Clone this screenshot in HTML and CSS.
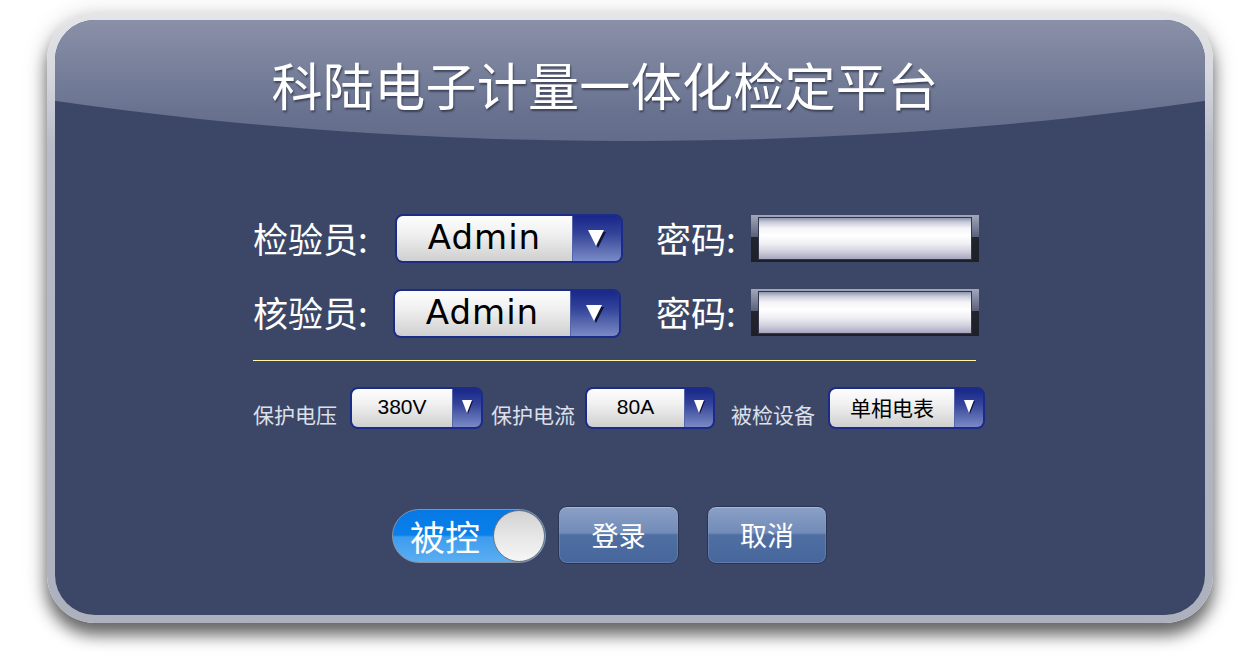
FILE: index.html
```html
<!DOCTYPE html>
<html lang="zh-CN">
<head>
<meta charset="utf-8">
<title>科陆电子计量一体化检定平台</title>
<link rel="stylesheet" href="styles.css">
</head>
<body>
<div class="frame">
  <div class="panel">
    <h1 class="title">科陆电子计量一体化检定平台</h1>
    <div class="form">
      <div class="row">
        <span class="lbl lbl-a">检验员:</span>
        <div class="sel sel-big"><span class="val">Admin</span><span class="arr"><svg width="20" height="20" viewBox="0 0 20 20"><polygon points="3,3 19,3 11,19" fill="#101436"/><polygon points="1,1 17,1 9,17" fill="#fff"/></svg></span></div>
        <span class="lbl lbl-p">密码:</span>
        <div class="pwd"><div class="pwd-in"></div></div>
      </div>
      <div class="row row2">
        <span class="lbl lbl-b">核验员:</span>
        <div class="sel sel-big"><span class="val">Admin</span><span class="arr"><svg width="20" height="20" viewBox="0 0 20 20"><polygon points="3,3 19,3 11,19" fill="#101436"/><polygon points="1,1 17,1 9,17" fill="#fff"/></svg></span></div>
        <span class="lbl lbl-p">密码:</span>
        <div class="pwd"><div class="pwd-in"></div></div>
      </div>
      <div class="sep"></div>
      <div class="row row3">
        <span class="slbl slbl-1">保护电压</span>
        <div class="sel sel-sm w1"><span class="val">380V</span><span class="arr"><svg width="13" height="16" viewBox="0 0 13 16"><polygon points="2,2 12,2 7,15" fill="#101436"/><polygon points="1,1 11,1 6,14" fill="#fff"/></svg></span></div>
        <span class="slbl slbl-2">保护电流</span>
        <div class="sel sel-sm w2"><span class="val">80A</span><span class="arr"><svg width="13" height="16" viewBox="0 0 13 16"><polygon points="2,2 12,2 7,15" fill="#101436"/><polygon points="1,1 11,1 6,14" fill="#fff"/></svg></span></div>
        <span class="slbl slbl-3">被检设备</span>
        <div class="sel sel-sm w3"><span class="val cjk">单相电表</span><span class="arr"><svg width="13" height="16" viewBox="0 0 13 16"><polygon points="2,2 12,2 7,15" fill="#101436"/><polygon points="1,1 11,1 6,14" fill="#fff"/></svg></span></div>
      </div>
      <div class="actions">
        <div class="toggle"><span class="toggle-text">被控</span><span class="knob"></span></div>
        <button class="btn btn-login">登录</button>
        <button class="btn btn-cancel">取消</button>
      </div>
    </div>
  </div>
</div>
</body>
</html>
```

FILE: styles.css
```css
html, body {
  margin: 0;
  padding: 0;
  background: #ffffff;
}
body {
  font-family: "Noto Sans CJK SC", "Noto Sans", sans-serif;
  width: 1259px;
  height: 668px;
  overflow: hidden;
}
.frame {
  box-sizing: border-box;
  width: 1166px;
  height: 611px;
  margin: 12px 0 0 47px;
  padding: 8px;
  border-radius: 48px;
  background: linear-gradient(to bottom, #e4e6e8 0%, #d6d8de 10%, #b8bcc8 22%, #adb1be 100%);
  box-shadow: 0 12px 16px rgba(0, 0, 0, 0.55), 0 4px 26px rgba(0, 0, 0, 0.18);
}
.panel {
  position: relative;
  height: 100%;
  border-radius: 40px;
  background: #3c4767;
  overflow: hidden;
}
.panel::before {
  content: "";
  position: absolute;
  left: 0;
  top: 0;
  right: 0;
  height: 124px;
  background: linear-gradient(to bottom, #8a90a7 0%, #7a829c 35%, #68728f 75%, #636d8b 100%);
  clip-path: ellipse(1500px 524px at 50% -403px);
}
.title {
  position: relative;
  margin: 0;
  padding: 34px 50px 0 0;
  height: 60px;
  line-height: 60px;
  text-align: center;
  font-size: 51px;
  font-weight: 400;
  color: #ffffff;
  letter-spacing: 0.3px;
  text-shadow: 1px 2px 2px rgba(20, 24, 40, 0.55);
}
.form {
  margin: 100px 0 0 198px;
}
.row {
  display: flex;
  align-items: center;
  height: 48px;
}
.row2 {
  margin-top: 26px;
}
.lbl {
  color: #ffffff;
  font-size: 35px;
  line-height: 48px;
}
.lbl-a { width: 142px; }
.lbl-b { width: 140px; }
.row2 .lbl-p { margin-left: 35px; }
.lbl-p {
  width: 95px;
  margin-left: 33px;
}
.sel {
  box-sizing: border-box;
  display: flex;
  border: 2px solid #1a2b8a;
  border-radius: 8px;
  overflow: hidden;
}
.sel .val {
  flex: 1;
  display: flex;
  align-items: center;
  justify-content: center;
  color: #000000;
  background: linear-gradient(to bottom, #fdfdfd 0%, #f0f0f0 40%, #dddddd 75%, #cfcfcf 100%);
  border-right: 1px solid #5566aa;
}
.sel .arr {
  display: flex;
  align-items: center;
  justify-content: center;
  background: linear-gradient(to bottom, #18278a 0%, #34449a 40%, #5868ae 70%, #7a89c6 100%);
}
.sel-big {
  width: 228px;
  height: 49px;
}
.row2 .sel-big {
  height: 49px;
  margin-top: 2px;
}
.sel-big .val {
  font-family: "DejaVu Sans", sans-serif;
  font-size: 34px;
  letter-spacing: 1px;
  padding-bottom: 2px;
}
.sel-big .arr {
  width: 48px;
  padding-top: 2px;
}
.pwd {
  box-sizing: border-box;
  width: 228px;
  height: 47px;
  padding: 2px 7px 2px 7px;
  background: linear-gradient(to bottom, #a2a8ba 0%, #7b8299 25%, #5b6179 46%, #22242f 47%, #1d1f29 100%);
}
.pwd-in {
  box-sizing: border-box;
  height: 100%;
  border: 1px solid #34364a;
  background: linear-gradient(to bottom, #8e94ac 0%, #c8cad8 10%, #f4f4f8 25%, #ffffff 42%, #f2f2f6 60%, #d4d4e0 80%, #a6a6c0 100%);
}
.sep {
  width: 723px;
  height: 1px;
  margin-top: 24px;
  background: #fff6a6;
}
.row3 {
  margin-top: 26px;
  height: 42px;
  align-items: flex-start;
}
.slbl {
  color: #dde0ea;
  font-size: 21px;
  line-height: 28px;
  margin-top: 13px;
}
.slbl-1 { width: 97px; }
.slbl-2 { width: 94px; margin-left: 8px; }
.slbl-3 { width: 97px; margin-left: 16px; }
.sel-sm {
  height: 42px;
}
.sel-sm .val {
  font-family: "Liberation Sans", Arial, sans-serif;
  font-size: 21px;
  padding-bottom: 3px;
}
.sel-sm .val.cjk {
  font-family: "Noto Sans CJK SC", sans-serif;
  font-size: 21px;
}
.sel-sm .arr {
  width: 28px;
  padding-bottom: 3px;
}
.w1 { width: 133px; }
.w2 { width: 130px; }
.w3 { width: 157px; }
.actions {
  display: flex;
  align-items: flex-start;
  margin: 77px 0 0 139px;
}
.toggle {
  box-sizing: border-box;
  display: flex;
  align-items: center;
  width: 154px;
  height: 54px;
  margin-top: 3px;
  border: 1px solid #8893a4;
  border-radius: 27px;
  background: linear-gradient(to bottom, #0678e4 0%, #0a80ea 48%, #3e9cee 52%, #5aaef2 100%);
}
.toggle-text {
  color: #ffffff;
  font-size: 35px;
  line-height: 40px;
  padding-left: 17px;
}
.knob {
  box-sizing: border-box;
  width: 52px;
  height: 52px;
  margin-left: auto;
  border: 1px solid #6c7480;
  border-radius: 50%;
  background: linear-gradient(to bottom, #d2d2d2 0%, #e6e6e6 50%, #f6f6f6 100%);
}
.btn {
  box-sizing: border-box;
  height: 58px;
  border: 1px solid #2b3552;
  border-radius: 9px;
  box-shadow: inset 0 1px 0 rgba(255, 255, 255, 0.25), inset 0 0 0 1px rgba(140, 160, 200, 0.35);
  background: linear-gradient(to bottom, #8aa0c6 0%, #728cb8 46%, #4f6ea2 50%, #47679c 100%);
  color: #ffffff;
  font-family: "Noto Sans CJK SC", sans-serif;
  font-size: 27px;
  padding: 0;
  padding-bottom: 2px;
}
.btn-login {
  width: 121px;
  margin-left: 12px;
}
.btn-cancel {
  width: 120px;
  margin-left: 28px;
}
```
